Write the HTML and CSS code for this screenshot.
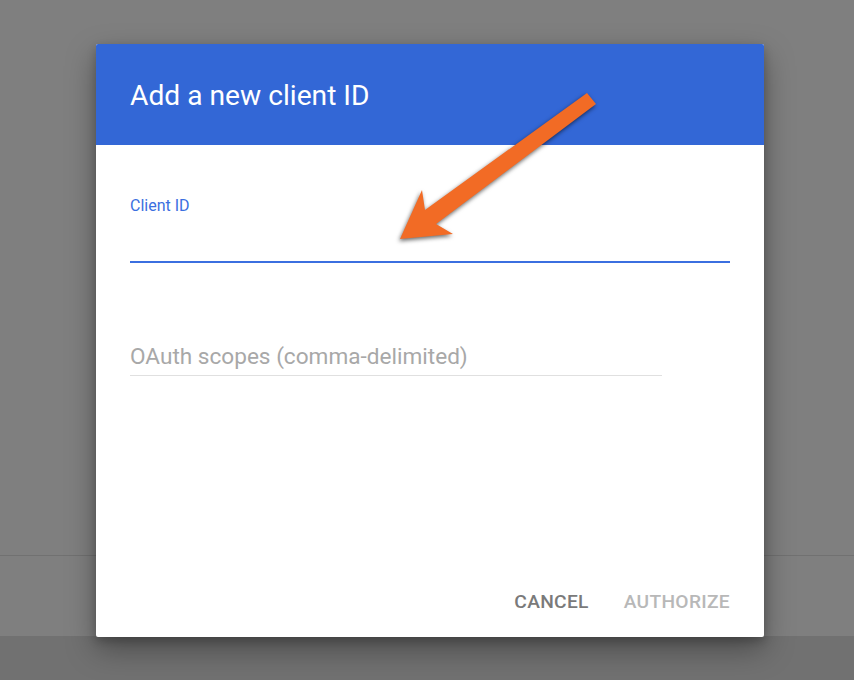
FILE: index.html
```html
<!DOCTYPE html>
<html lang="en">
<head>
  <meta charset="UTF-8">
  <meta name="viewport" content="width=device-width, initial-scale=1.0">
  <title>Add a new client ID</title>
  <link rel="stylesheet" href="styles.css">
</head>
<body>
  <div class='page'>
    <div class='page_main'></div>
    <div class='page_band'></div>
    <div class='page_foot'></div>
  </div>

  <div class='dialog'>
    <div class='dialog_header'>
      <h1>Add a new client ID</h1>
    </div>
    <div class='dialog_body'>
      <div class='field focused'>
        <label>Client ID</label>
        <div class='input'></div>
      </div>
      <div class='field short'>
        <div class='input placeholder'>OAuth scopes (comma-delimited)</div>
      </div>
    </div>
    <div class='actions'>
      <a href='#' class='btn cancel'>Cancel</a>
      <a href='#' class='btn authorize'>Authorize</a>
    </div>
  </div>

  <svg class='arrow' width='854' height='680' viewBox='0 0 854 680'>
    <polygon points='587,93 596,104 436,224 453,234 400,239 422,190 425,210' fill='#f26b25'/>
  </svg>
</body>
</html>
```

FILE: styles.css
```css
html, body {
  margin: 0;
  padding: 0;
}
body {
  width: 854px;
  height: 680px;
  overflow: hidden;
  background-color: #7f7f7f;
  font-family: Roboto, "Liberation Sans", sans-serif;
  position: relative;
}

.page {
  display: flex;
  flex-direction: column;
  height: 100%;
}
.page_main {
  height: 555px;
  border-bottom: 1px solid #717171;
}
.page_band {
  height: 80px;
  border-bottom: 1px solid #717171;
}
.page_foot {
  flex: 1;
  background-color: #717171;
}

.dialog {
  position: absolute;
  left: 96px;
  top: 44px;
  width: 668px;
  height: 593px;
  background-color: white;
  border-radius: 2px;
  overflow: hidden;
  display: flex;
  flex-direction: column;
  box-shadow: 0 12px 30px rgba(0, 0, 0, 0.35), 0 4px 10px rgba(0, 0, 0, 0.2);
}
.dialog_header {
  background-color: #3367d6;
  height: 101px;
  padding: 0 34px;
  display: flex;
  align-items: center;
}
.dialog_header h1 {
  margin: 0;
  color: white;
  font-weight: 400;
  font-size: 28.2px;
  padding-top: 1px;
}

.dialog_body {
  flex: 1;
  padding: 51px 34px 0;
}
.field {
  margin-bottom: 81px;
}
.field label {
  display: block;
  font-size: 16px;
  line-height: 20px;
  color: #3b6fe0;
}
.field .input {
  height: 45px;
  border-bottom: 1px solid #e0e0e0;
  font-size: 22.6px;
  color: #a8a8a8;
}
.field.focused .input {
  border-bottom: 2px solid #3b6fe0;
}
.field.short {
  width: 532px;
}
.field .placeholder {
  height: 31px;
  line-height: 26px;
}

.actions {
  display: flex;
  justify-content: flex-end;
  gap: 35px;
  padding: 0 34px 24px;
}
.btn {
  text-decoration: none;
  text-transform: uppercase;
  font-weight: 500;
  font-size: 19.2px;
  letter-spacing: 0.3px;
}
.cancel {
  color: #7a7a7a;
}
.authorize {
  color: #b8b8b8;
}

.arrow {
  position: absolute;
  left: 0;
  top: 0;
  filter: drop-shadow(-1px 2px 2px rgba(0, 0, 0, 0.6));
}
```
